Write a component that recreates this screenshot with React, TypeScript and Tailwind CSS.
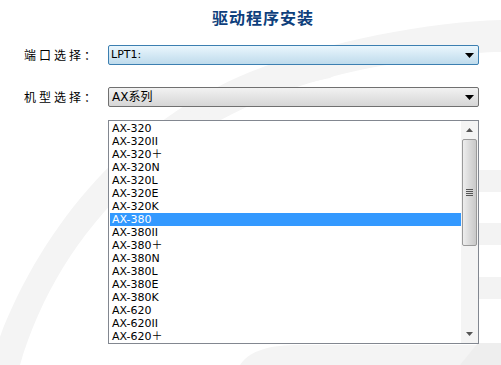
import React from "react";

const items = [
  "AX-320", "AX-320II", "AX-320＋", "AX-320N", "AX-320L", "AX-320E", "AX-320K",
  "AX-380", "AX-380II", "AX-380＋", "AX-380N", "AX-380L", "AX-380E", "AX-380K",
  "AX-620", "AX-620II", "AX-620＋",
];

function Arrow() {
  return (
    <svg width="9" height="5" viewBox="0 0 9 5" className="block">
      <path d="M0 0 H9 L4.5 5 Z" fill="#000" />
    </svg>
  );
}

export default function App() {
  const font = { fontFamily: '"DejaVu Sans", "Noto Sans CJK SC", sans-serif' };
  return (
    <div className="relative w-[501px] h-[365px] overflow-hidden bg-white" style={{ fontFamily: '"Liberation Sans", "Noto Sans CJK SC", sans-serif' }}>
      <svg className="absolute inset-0" width="501" height="365" viewBox="0 0 501 365">
        <path d="M20 365 C 60 230, 170 110, 360 70 C 420 58, 470 52, 501 52 L501 20 C 430 22, 330 40, 250 72 C 120 125, 30 240, -10 365 Z" fill="#f4f4f4" />
        <path d="M150 135 C 200 100, 270 80, 340 72 L 330 78 C 260 92, 200 112, 160 140 Z" fill="#f4f4f4" />
        <rect x="478" y="170" width="23" height="22" fill="#f3f3f3" />
        <rect x="478" y="223" width="23" height="22" fill="#f3f3f3" />
        <rect x="478" y="277" width="23" height="22" fill="#f3f3f3" />
        <path d="M240 365 C 250 350, 270 345, 300 345 L 501 345 L 501 365 Z" fill="#f4f4f4" />
        <path d="M460 365 L 478 343 L 501 343 L 501 365 Z" fill="#eeeeee" />
      </svg>

      <div className="relative flex flex-col">
        <div className="pl-[212px] pt-[7px] h-[27px] text-[16px] leading-[20px] font-bold text-[#0e3f7c] tracking-[1px]" style={{ fontFamily: '"Noto Sans CJK SC", sans-serif' }}>
          驱动程序安装
        </div>

        <div className="mt-[18px] flex items-center h-[20px]">
          <div className="w-[108px] pl-[24px] text-[12px] text-black tracking-[3px]" style={{ fontFamily: '"Noto Sans CJK SC", sans-serif' }}>端口选择：</div>
          <div className="w-[371px] h-[20px] flex items-center justify-between rounded-[2px] border border-[#3c7fb1] bg-gradient-to-b from-[#eaf6fd] to-[#bfdbec] pl-[2px] pr-[4px]">
            <span className="text-[11px] text-black" style={font}>LPT1:</span>
            <Arrow />
          </div>
        </div>

        <div className="mt-[22px] flex items-center h-[20px]">
          <div className="w-[108px] pl-[24px] text-[12px] text-black tracking-[3px]" style={{ fontFamily: '"Noto Sans CJK SC", sans-serif' }}>机型选择：</div>
          <div className="w-[371px] h-[20px] flex items-center justify-between rounded-[2px] border border-[#707070] bg-gradient-to-b from-[#f2f2f2] to-[#d6d6d6] pl-[3px] pr-[4px]">
            <span className="text-[12px] text-black" style={font}>AX系列</span>
            <Arrow />
          </div>
        </div>

        <div className="mt-[13px] ml-[108px] w-[371px] h-[224px] border border-[#828790] bg-white flex">
          <div className="flex-1 pt-[1px] pl-[1px] overflow-hidden">
            {items.map((t) => (
              <div
                key={t}
                className={
                  "h-[13px] leading-[13px] pl-[2px] text-[11px] " +
                  (t === "AX-380" ? "bg-[#3399ff] text-white" : "text-black")
                }
                style={font}
              >
                {t}
              </div>
            ))}
          </div>
          <div className="w-[17px] bg-[#f4f4f4] flex flex-col items-center">
            <div className="h-[18px] flex items-center justify-center">
              <svg width="7" height="4" viewBox="0 0 7 4"><path d="M0 4 L3.5 0 L7 4 Z" fill="#555" /></svg>
            </div>
            <div className="w-[15px] h-[107px] rounded-[2px] border border-[#9a9a9a] bg-gradient-to-r from-[#eeeeee] via-[#dadada] to-[#c9c9c9] flex items-center justify-center">
              <svg width="7" height="7" viewBox="0 0 7 7">
                <path d="M0 0.5 H7 M0 2.5 H7 M0 4.5 H7 M0 6.5 H7" stroke="#555" strokeWidth="1" />
              </svg>
            </div>
            <div className="flex-1" />
            <div className="h-[18px] flex items-center justify-center">
              <svg width="7" height="4" viewBox="0 0 7 4"><path d="M0 0 L7 0 L3.5 4 Z" fill="#555" /></svg>
            </div>
          </div>
        </div>
      </div>
    </div>
  );
}
